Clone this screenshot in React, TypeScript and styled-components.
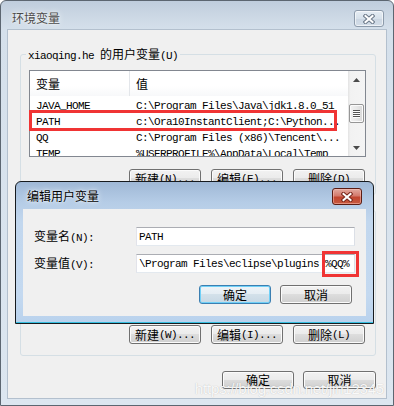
import React from "react";
import styled, { createGlobalStyle } from "styled-components";

const GlobalStyle = createGlobalStyle`
  html, body { margin: 0; padding: 0; background: #fff; }
  body {
    font-family: "Noto Sans CJK SC", "Liberation Sans", sans-serif;
    font-size: 12px;
    color: #000;
  }
  * { box-sizing: border-box; }
`;

// CJK and latin runs get different fonts, like SimSun does (12px han, 6px ascii)
const Han = styled.span`
  font-family: "Noto Sans CJK SC", sans-serif;
  font-size: 12px;
`;

const Asc = styled.span`
  font-family: "Liberation Mono", monospace;
  font-size: 11px;
  letter-spacing: -0.6px;
  white-space: pre;
`;

function Txt({ s }: { s: string }) {
  const parts = s.split(/([\u3000-\u9fff\uff00-\uffef]+)/);
  return (
    <>
      {parts.map((p, i) =>
        p === "" ? null : i % 2 ? <Han key={i}>{p}</Han> : <Asc key={i}>{p}</Asc>
      )}
    </>
  );
}

const Window = styled.div`
  position: relative;
  width: 394px;
  height: 406px;
  display: flex;
  flex-direction: column;
  border: 1px solid #5c6671;
  border-radius: 6px 6px 0 0;
  background: linear-gradient(180deg, #bfcddd 0px, #cbd7e4 14px, #d5e0eb 29px, #dce6f0 100%);
  overflow: hidden;
`;

const TitleBar = styled.div`
  height: 28px;
  flex-shrink: 0;
  display: flex;
  align-items: flex-start;
  justify-content: space-between;
  padding: 9px 9px 0 11px;
`;

const Title = styled.div<{ $active?: boolean }>`
  line-height: 16px;
  font-size: 12px;
  color: ${(p) => (p.$active ? "#000" : "#4a4a4a")};
  text-shadow: 0 0 6px rgba(255, 255, 255, 0.95), 0 0 2px rgba(255, 255, 255, 0.9);
`;

const CloseBtn = styled.div<{ $active?: boolean }>`
  width: 30px;
  height: 17px;
  display: flex;
  align-items: center;
  justify-content: center;
  border-radius: 3px;
  border: 1px solid ${(p) => (p.$active ? "#5b1d14" : "#8d9bab")};
  background: ${(p) =>
    p.$active
      ? "linear-gradient(180deg, #e2a99f 0%, #d47a6c 45%, #c2452f 55%, #c65a40 100%)"
      : "linear-gradient(180deg, #e6edf4 0%, #d7e1eb 50%, #cbd6e2 51%, #d3dde8 100%)"};
  box-shadow: inset 0 0 0 1px ${(p) => (p.$active ? "rgba(255,200,190,0.5)" : "rgba(255,255,255,0.6)")};
`;

function CloseX({ dark }: { dark: string }) {
  return (
    <svg width="12" height="10" viewBox="0 0 12 10">
      <path d="M2.5 2 L9.5 8 M9.5 2 L2.5 8" stroke={dark} strokeWidth="4.2" strokeLinecap="square" />
      <path d="M2.5 2 L9.5 8 M9.5 2 L2.5 8" stroke="#fff" strokeWidth="2" strokeLinecap="square" />
    </svg>
  );
}

const Body = styled.div`
  flex: 1;
  margin: 0 6px 6px;
  border: 1px solid #b3c0ce;
  background: #f0f0f0;
  display: flex;
  flex-direction: column;
  padding: 24px 10px 0 12px;
`;

const GroupBox = styled.div<{ $gap?: number; $pb: number }>`
  margin-top: ${(p) => p.$gap ?? 0}px;
  border: 1px solid #d5dfe5;
  border-radius: 3px;
  padding: 0 9px ${(p) => p.$pb}px 8px;
  display: flex;
  flex-direction: column;
`;

const GroupTitle = styled.div`
  align-self: flex-start;
  margin: -8px 0 0 -3px;
  padding: 0 2px;
  line-height: 14px;
  background: #f0f0f0;
`;

const List = styled.div<{ $h: number }>`
  position: relative;
  height: ${(p) => p.$h}px;
  margin-top: 7px;
  border: 1px solid #828790;
  background: #fff;
  display: flex;
`;

const ListBody = styled.div`
  flex: 1;
  overflow: hidden;
`;

const Header = styled.div`
  height: 25px;
  display: grid;
  grid-template-columns: 100px 1fr;
  background: linear-gradient(180deg, #ffffff 0%, #ffffff 60%, #f7f8fa 100%);
`;

const HeadCell = styled.div<{ $sep?: boolean }>`
  display: flex;
  align-items: center;
  padding-left: 6px;
  line-height: 16px;
  border-right: ${(p) => (p.$sep ? "1px solid #e3e6ea" : "none")};
`;

const Row = styled.div`
  height: 16px;
  display: grid;
  grid-template-columns: 100px 1fr;
  line-height: 16px;
`;

const Cell = styled.div`
  padding-left: 6px;
  white-space: nowrap;
  overflow: hidden;
`;

const ScrollBar = styled.div`
  width: 17px;
  display: flex;
  flex-direction: column;
  background: linear-gradient(90deg, #e3e3e3 0%, #f2f2f2 15%, #f4f4f4 100%);
`;

const Arrow = styled.div`
  height: 17px;
  display: flex;
  align-items: center;
  justify-content: center;
`;

const Thumb = styled.div<{ $top: number }>`
  margin: ${(p) => p.$top}px 1px 0;
  height: 19px;
  border: 1px solid #969696;
  border-radius: 2px;
  background: linear-gradient(90deg, #f3f3f3 0%, #e8e8e8 50%, #d8d8d8 100%);
  box-shadow: inset 0 0 0 1px #fbfbfb;
  display: flex;
  flex-direction: column;
  align-items: center;
  justify-content: center;
  gap: 1px;
`;

const Grip = styled.div`
  width: 7px;
  height: 1px;
  background: #555;
  box-shadow: 0 1px 0 #fff;
`;

const Spacer = styled.div`
  flex: 1;
`;

const Mark = styled.div<{ $l: number; $t: number; $w: number; $h: number }>`
  position: absolute;
  left: ${(p) => p.$l}px;
  top: ${(p) => p.$t}px;
  width: ${(p) => p.$w}px;
  height: ${(p) => p.$h}px;
  border: 3px solid #f03434;
  pointer-events: none;
`;

const BtnRow = styled.div<{ $mt: number; $gap: number; $mr?: number }>`
  margin-top: ${(p) => p.$mt}px;
  margin-right: ${(p) => p.$mr ?? 0}px;
  display: flex;
  justify-content: flex-end;
  gap: ${(p) => p.$gap}px;
`;

const Btn = styled.button<{ $focus?: boolean; $w?: number; $h?: number }>`
  width: ${(p) => p.$w ?? 72}px;
  height: ${(p) => p.$h ?? 19}px;
  padding: 0;
  display: flex;
  align-items: center;
  justify-content: center;
  font: inherit;
  line-height: 16px;
  color: #000;
  border: 1px solid ${(p) => (p.$focus ? "#3c7fb1" : "#707070")};
  border-radius: 3px;
  background: ${(p) =>
    p.$focus
      ? "linear-gradient(180deg, #eef4f8 0%, #e4edf3 49%, #d3e1ea 50%, #c7d8e4 100%)"
      : "linear-gradient(180deg, #f2f2f2 0%, #ebebeb 49%, #dddddd 50%, #cfcfcf 100%)"};
  box-shadow: inset 0 0 0 1px ${(p) => (p.$focus ? "#6fd0f7" : "#fbfbfb")};
`;

const Dialog = styled.div`
  position: absolute;
  left: 14px;
  top: 180px;
  width: 359px;
  height: 143px;
  display: flex;
  flex-direction: column;
  border: 1px solid #161a1e;
  border-radius: 6px 6px 0 0;
  background: linear-gradient(180deg, #9fb8d6 0px, #b5cce6 20px, #c2d7ee 40px, #c4d9f0 80%, #b9d2ed 100%);
  box-shadow: inset 0 -1px 0 #36bfe0;
`;

const DlgTitleBar = styled.div`
  height: 27px;
  flex-shrink: 0;
  display: flex;
  align-items: flex-start;
  justify-content: space-between;
  padding: 6px 11px 0 11px;
`;

const DlgBody = styled.div`
  flex: 1;
  margin: 0 7px 7px;
  background: #f0f0f0;
  padding: 18px 11px 0 11px;
  display: flex;
  flex-direction: column;
`;

const Form = styled.div`
  display: grid;
  grid-template-columns: 102px 1fr;
  row-gap: 8px;
  align-items: center;
`;

const Label = styled.div`
  line-height: 16px;
`;

const Field = styled.div`
  position: relative;
  height: 19px;
  padding-left: 2px;
  display: flex;
  align-items: center;
  white-space: nowrap;
  background: #fff;
  border: 1px solid;
  border-color: #abadb3 #dbdfe6 #e3e9ef #e2e3ea;
  line-height: 16px;
`;

const Watermark = styled.div`
  position: absolute;
  right: 9px;
  bottom: 8px;
  font-family: "Liberation Sans", Arial, sans-serif;
  font-size: 15px;
  letter-spacing: -0.2px;
  color: rgba(255, 255, 255, 0.92);
  text-shadow: 0 0 1px rgba(0, 0, 0, 0.25);
  pointer-events: none;
`;

const userVars = [
  ["JAVA_HOME", "C:\\Program Files\\Java\\jdk1.8.0_51"],
  ["PATH", "c:\\Ora10InstantClient;C:\\Python..."],
  ["QQ", "C:\\Program Files (x86)\\Tencent\\..."],
  ["TEMP", "%USERPROFILE%\\AppData\\Local\\Temp"],
];

const sysVars = [
  ["ComSpec", "C:\\Windows\\system32\\cmd.exe"],
  ["FP_NO_HOST_C...", "NO"],
  ["NUMBER_OF_PR...", "4"],
  ["OS", "Windows_NT"],
];

function ArrowGlyph({ up }: { up?: boolean }) {
  return (
    <svg width="7" height="4" viewBox="0 0 7 4">
      <path d={up ? "M0 4 L3.5 0 L7 4 Z" : "M0 0 L3.5 4 L7 0 Z"} fill="#4a4a4a" />
    </svg>
  );
}

function VarList({ rows, h, thumbTop, children }: { rows: string[][]; h: number; thumbTop: number; children?: React.ReactNode }) {
  return (
    <List $h={h}>
      <ListBody>
        <Header>
          <HeadCell $sep>
            <Txt s="变量" />
          </HeadCell>
          <HeadCell>
            <Txt s="值" />
          </HeadCell>
        </Header>
        {rows.map(([k, v]) => (
          <Row key={k}>
            <Cell>
              <Txt s={k} />
            </Cell>
            <Cell>
              <Txt s={v} />
            </Cell>
          </Row>
        ))}
      </ListBody>
      <ScrollBar>
        <Arrow>
          <ArrowGlyph up />
        </Arrow>
        <Thumb $top={thumbTop}>
          <Grip />
          <Grip />
          <Grip />
          <Grip />
        </Thumb>
        <Spacer />
        <Arrow>
          <ArrowGlyph />
        </Arrow>
      </ScrollBar>
      {children}
    </List>
  );
}

export default function App() {
  return (
    <>
      <GlobalStyle />
      <Window>
        <TitleBar>
          <Title>环境变量</Title>
          <CloseBtn>
            <CloseX dark="#6f7c8c" />
          </CloseBtn>
        </TitleBar>

        <Body>
          <GroupBox $pb={6}>
            <GroupTitle>
              <Txt s="xiaoqing.he 的用户变量(U)" />
            </GroupTitle>
            <VarList rows={userVars} h={87} thumbTop={16}>
              <Mark $l={-1} $t={39} $w={308} $h={21} />
            </VarList>
            <BtnRow $mt={12} $gap={10} $mr={1}>
              <Btn><Txt s="新建(N)..." /></Btn>
              <Btn><Txt s="编辑(E)..." /></Btn>
              <Btn><Txt s="删除(D)" /></Btn>
            </BtnRow>
          </GroupBox>

          <GroupBox $gap={15} $pb={11}>
            <GroupTitle>
              <Txt s="系统变量(S)" />
            </GroupTitle>
            <VarList rows={sysVars} h={87} thumbTop={0} />
            <BtnRow $mt={12} $gap={10} $mr={1}>
              <Btn><Txt s="新建(W)..." /></Btn>
              <Btn><Txt s="编辑(I)..." /></Btn>
              <Btn><Txt s="删除(L)" /></Btn>
            </BtnRow>
          </GroupBox>

          <BtnRow $mt={15} $gap={9}>
            <Btn $h={18}><Txt s="确定" /></Btn>
            <Btn $h={18} $w={73}><Txt s="取消" /></Btn>
          </BtnRow>
        </Body>

        <Dialog>
          <DlgTitleBar>
            <Title $active>编辑用户变量</Title>
            <CloseBtn $active>
              <CloseX dark="#7a2a1e" />
            </CloseBtn>
          </DlgTitleBar>
          <DlgBody>
            <Form>
              <Label><Txt s="变量名(N):" /></Label>
              <Field><Txt s="PATH" /></Field>
              <Label><Txt s="变量值(V):" /></Label>
              <Field>
                <Txt s="\Program Files\eclipse\plugins %QQ%" />
                <Mark $l={185} $t={-4} $w={37} $h={26} />
              </Field>
            </Form>
            <BtnRow $mt={12} $gap={9} $mr={3}>
              <Btn $focus><Txt s="确定" /></Btn>
              <Btn><Txt s="取消" /></Btn>
            </BtnRow>
          </DlgBody>
        </Dialog>

        <Watermark>https://blog.csdn.net/jin12345</Watermark>
      </Window>
    </>
  );
}
